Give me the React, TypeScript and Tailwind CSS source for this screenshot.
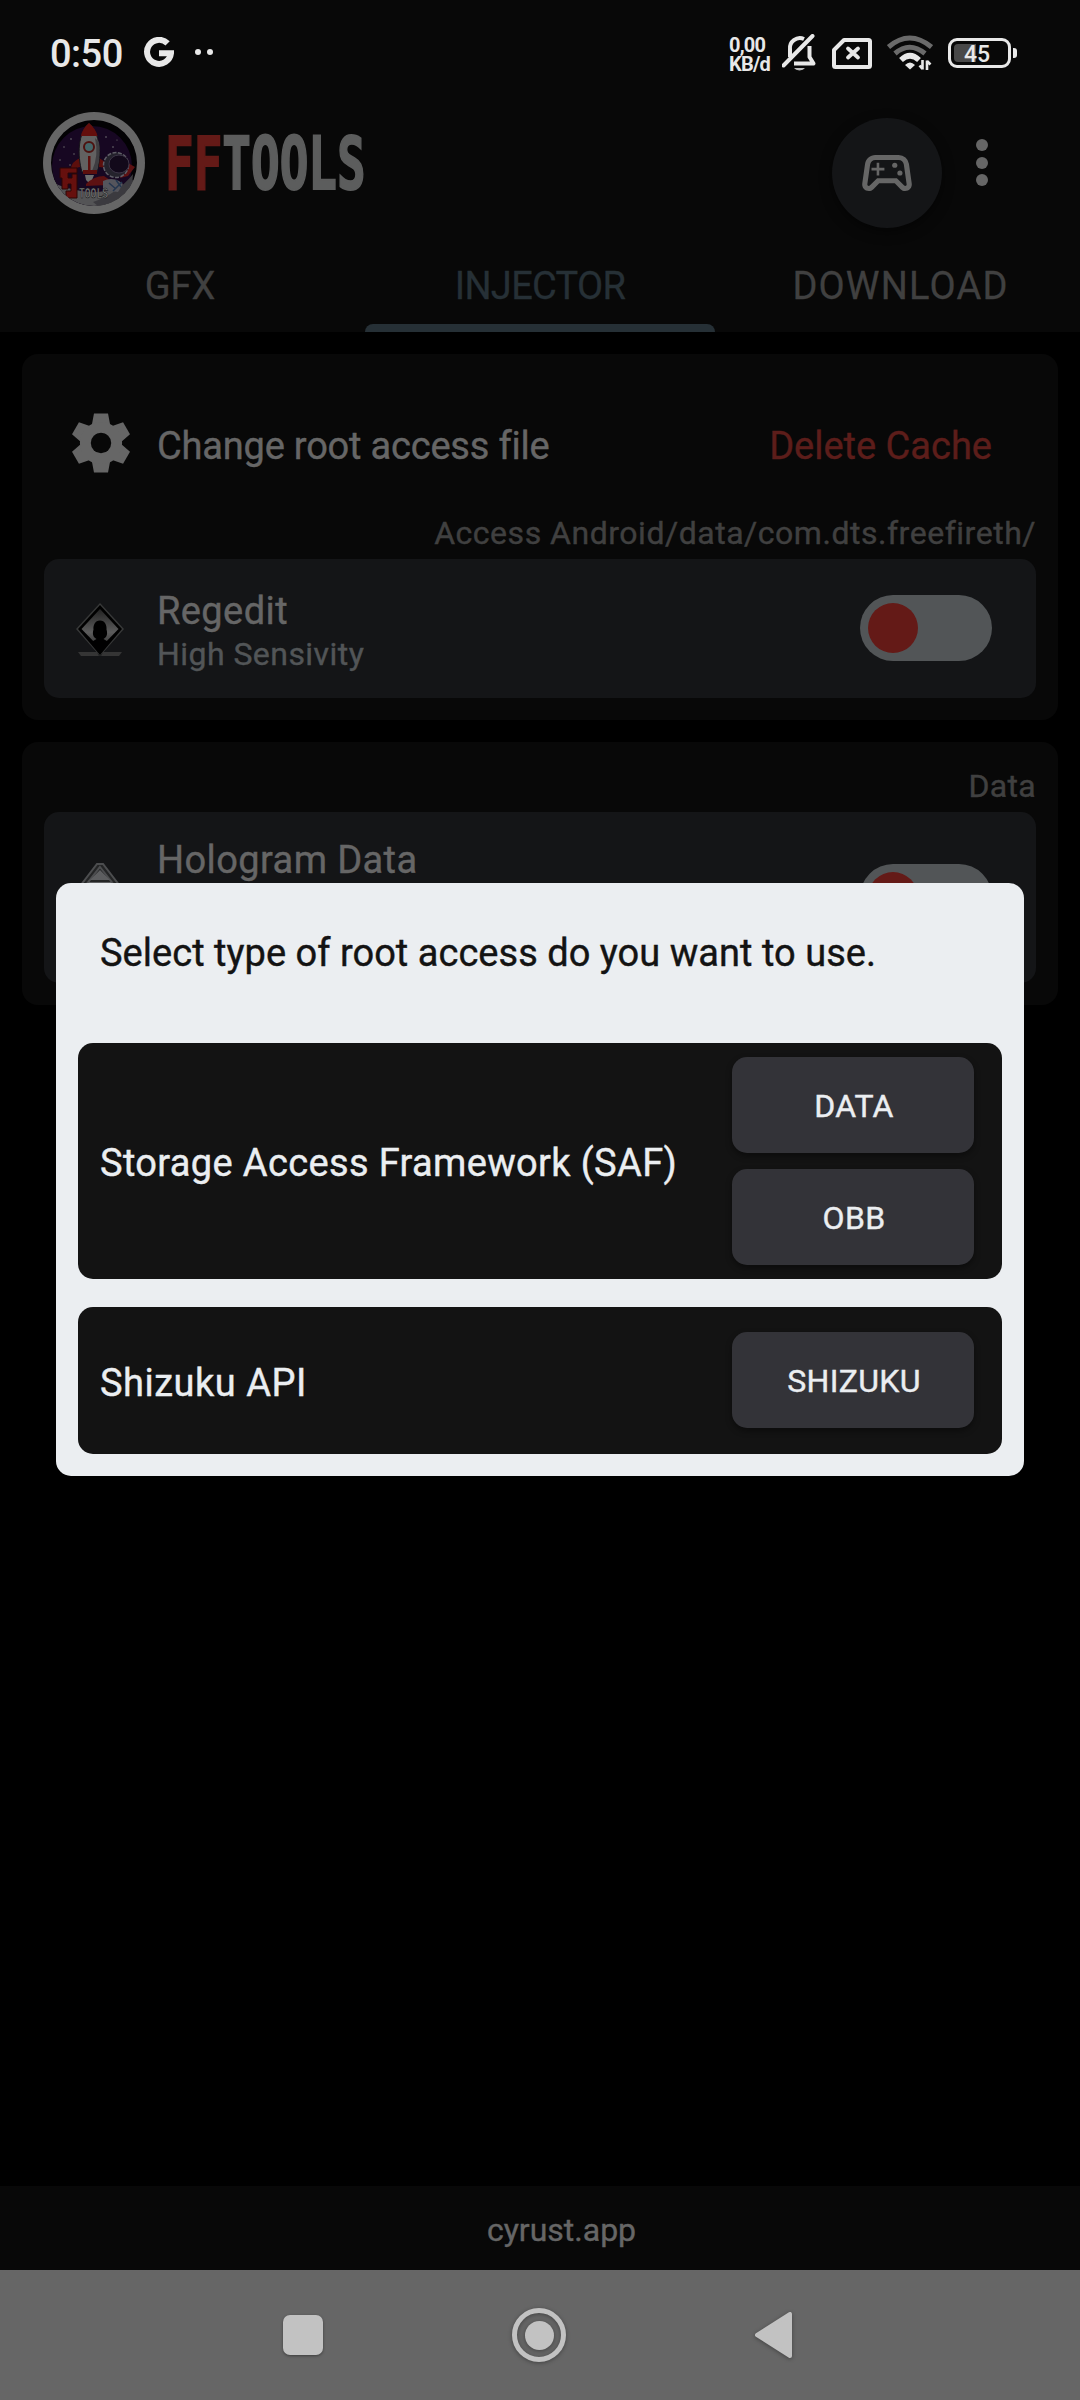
import { MdOutlineSportsEsports } from "react-icons/md";

function GoogleG() {
  return (
    <svg width="30" height="30" viewBox="0 0 30 30" fill="none" stroke="#e8e8e8" strokeWidth="6">
      <path d="M23.6 6.4A12 12 0 1 0 27 16.2H15" />
    </svg>
  );
}

function BellOff() {
  return (
    <svg width="36" height="38" viewBox="0 0 36 38" fill="none" stroke="#e8e8e8" strokeWidth="4">
      <path d="M8 23V15.500A10 10 0 0 1 22 5" />
      <path d="M27.500 12v11l4 6.500H12" strokeLinejoin="round" />
      <path d="M1.500 31.500 30.500 2" strokeLinecap="round" />
      <path d="M12 34h11a6 4 0 0 1-11 0z" fill="#bdbdbd" stroke="none" />
    </svg>
  );
}

function SimMissing() {
  return (
    <svg width="40" height="31" viewBox="0 0 40 31" fill="none" stroke="#e8e8e8" strokeLinejoin="round">
      <path d="M12 2H36.500Q38 2 38 3.500V27.500Q38 29 36.500 29H3.500Q2 29 2 27.500V12Z" strokeWidth="4" />
      <path d="m16 10.500 10 9M26 10.500l-10 9" strokeWidth="3.800" strokeLinecap="round" />
    </svg>
  );
}

function Wifi() {
  return (
    <svg width="46" height="36" viewBox="0 0 46 36" fill="none">
      <path d="M1.500 12Q22.500-6 44.500 12" stroke="#6a6a6a" strokeWidth="5" />
      <path d="M8 18.500Q22.500 6 38 18.500" stroke="#6a6a6a" strokeWidth="5" />
      <path d="M14 25Q23 16.500 32 25" stroke="#e8e8e8" strokeWidth="5.500" />
      <path d="M18 30Q23 25 28 30L23 34.500Z" fill="#e8e8e8" />
      <path d="M35.500 25v9.500M35.500 34l-3-3.500M40 35v-9.500M40 26l3.500 3.500" stroke="#e8e8e8" strokeWidth="2.600" />
    </svg>
  );
}

function RocketLogo() {
  return (
    <svg width="102" height="102" viewBox="0 0 102 102">
      <defs>
        <clipPath id="badge"><circle cx="51" cy="51" r="43" /></clipPath>
      </defs>
      <circle cx="51" cy="51" r="51" fill="#666" />
      <g clipPath="url(#badge)">
        <circle cx="51" cy="51" r="43.500" fill="#030204" />
        <circle cx="49" cy="54" r="40" fill="#170722" />
        <g fill="#777">
          <circle cx="28" cy="27" r=".8" /><circle cx="21" cy="35" r=".7" /><circle cx="31" cy="42" r=".7" />
          <circle cx="63" cy="25" r=".8" /><circle cx="70" cy="35" r=".8" /><circle cx="17" cy="48" r=".7" />
          <circle cx="27" cy="53" r=".7" /><circle cx="74" cy="28" r=".6" />
        </g>
        <path d="M8 70Q26 78 46 80T94 66L80 94H8Z" fill="#545456" />
        <path d="M50 90Q74 82 90 62L88 88 60 98Z" fill="#3b3a3f" />
        <path d="M37 46q-9 4-9 11l9-2zM56 46q8 4 8 10l-8-1z" fill="#5c0f0d" />
        <path d="M46 11C35 21 34 43 39 60H54C59 43 57 21 46 11Z" fill="#626161" stroke="#17151a" />
        <path d="M52 26q4 18-3 33h5q4-18 2-29z" fill="#3f3e42" />
        <path d="M46 11Q39 17 38 24H54.500Q53 17 46 11Z" fill="#640e0c" />
        <circle cx="46" cy="35" r="5" fill="#446568" stroke="#4d1210" strokeWidth="2" />
        <path d="M45 44h2.500v18H45zM40 58h14v4H40z" fill="#5c0f0d" />
        <path d="M42 63h9l-2 5-3 3-3-3z" fill="#6c6c6c" />
        <path d="M43 72q8-8 18-8l6 4-2 5-22 1zM85 51l7 4-7 9-8 2z" fill="#5c1112" />
        <circle cx="73" cy="53" r="12.500" fill="#24222c" stroke="#5f5d66" strokeWidth="1.500" strokeDasharray="4 1.500" />
        <ellipse cx="76" cy="52" rx="10" ry="9" fill="#12091a" stroke="#3c3446" />
        <path d="M60 69q8-4 16 0l4 3-5 8-15-2z" fill="#55555c" />
        <path d="m66 71 7 6M73 68l5 7M79 70l-9 9" stroke="#24364f" strokeWidth="1.500" />
        <path d="M17 56H34V61H25V66H29V62H34V86H23V79H28V72H25V77H19V66H17Z" fill="#66100e" stroke="#2c0605" />
        <text x="36" y="85.500" fontFamily="Liberation Mono" fontWeight="700" fontSize="15" textLength="29" lengthAdjust="spacingAndGlyphs" fill="#7e7e7e" stroke="#111" strokeWidth=".6">TOOLS</text>
      </g>
    </svg>
  );
}

function Wordmark() {
  return (
    <div className="h-[58px] w-[200px]">
      <div className="origin-left scale-x-[0.652] whitespace-nowrap font-['DejaVu_Sans_Mono',monospace] text-[73px] leading-[60px] font-bold text-[#5c5d5d] [-webkit-text-stroke:2px]">
        <span className="text-[#641a17]">FF</span>TOOLS
      </div>
    </div>
  );
}

function Gear() {
  return (
    <svg width="58" height="60" viewBox="-29 -30 58 60" fill="#666">
      {[0, 60, 120, 180, 240, 300].map((a) => (
        <path key={a} d="M-7-29.500H7L9-19 0 0-9-19Z" transform={`rotate(${a})`} />
      ))}
      <circle r="15.600" fill="none" stroke="#666" strokeWidth="11" />
      <circle r="10.200" fill="#080808" />
    </svg>
  );
}

function RegeditIcon() {
  return (
    <svg width="56" height="56" viewBox="0 0 56 56">
      <defs>
        <linearGradient id="steel" x1="0" y1="0" x2="0" y2="1">
          <stop offset="0" stopColor="#222" /><stop offset=".6" stopColor="#5c5c5c" /><stop offset="1" stopColor="#2a2a2a" />
        </linearGradient>
      </defs>
      <path d="M6 51h19l2 4H9zM50 51H31l-2 4h18z" fill="#353535" />
      <path d="M28 2 52 28 28 55 4 28Z" fill="#383939" />
      <path d="M28 4 50 28 28 54 6 28Z" fill="#000" />
      <path d="M28 8 46.500 28 28 47 9.500 28Z" fill="url(#steel)" />
      <path d="M28 19.500c5 0 7 5 6.500 9 1.500 5 0 8-3 9.500l5 3L28 50l-8.500-9 5-3c-3-1.500-4.500-4.500-3-9.500-.5-4 1.500-9 6.500-9z" fill="#000" />
    </svg>
  );
}

function HologramIcon() {
  return (
    <svg width="56" height="66" viewBox="0 0 56 66" fill="none">
      <path d="M25 2h6L54 32 31 62h-6L2 32Z" fill="#242526" stroke="#4c4d4f" strokeWidth="2" />
      <path d="M28 5 49 32 28 59 7 32Z" stroke="#4c4d4f" strokeWidth="2" />
      <path d="M28 8 38 18H18ZM17 20h22l9 12-20 24L8 32Z" fill="#5d5e60" />
    </svg>
  );
}

function Toggle() {
  return (
    <div className="flex h-[66px] w-[132px] items-center rounded-full bg-[#525557] pl-2">
      <div className="size-[50px] rounded-full bg-[#641a17]" />
    </div>
  );
}

function DialogButton({ children }: { children: string }) {
  return (
    <button className="h-24 w-[242px] rounded-[15px] bg-[#333338] pt-[2px] pl-[2px] text-[32px] tracking-[0.300px] text-[#ebeef1] shadow-[0_3px_6px_rgba(0,0,0,0.4)] [-webkit-text-stroke:0.4px]">
      {children}
    </button>
  );
}

export default function App() {
  return (
    <div className="relative flex h-[2400px] w-[1080px] flex-col overflow-hidden bg-black font-[Roboto,sans-serif]">
      <header className="flex h-[332px] shrink-0 flex-col bg-[#080808]">
        <div className="flex h-[104px] items-center justify-between pr-[63px] pl-[50px] text-[#e8e8e8]">
          <div className="flex items-center">
            <span className="pt-[3px] text-[38px] leading-[44px] font-medium tracking-[-0.5px]">0:50</span>
            <div className="ml-[21px]"><GoogleG /></div>
            <div className="ml-[21px] flex gap-1.5">
              <div className="size-1.5 rounded-full bg-[#e8e8e8]" />
              <div className="size-1.5 rounded-full bg-[#e8e8e8]" />
            </div>
          </div>
          <div className="flex items-center pt-[2px]">
            <div className="mr-[12px] flex w-[41px] flex-col pt-[4px] text-[20px] leading-[19.500px] font-bold tracking-[-0.8px] whitespace-nowrap">
              <span>0,00</span><span>KB/d</span>
            </div>
            <BellOff />
            <div className="mr-[15px] ml-[14px]"><SimMissing /></div>
            <Wifi />
            <div className="ml-[15px] flex h-[30px] w-[63px] items-center rounded-[9px] border-[3.500px] border-[#e8e8e8] p-[3px]">
              <div className="h-[18px] w-[22px] rounded-l-[4px] bg-[#484848]" />
              <span className="-ml-[12px] pt-[2px] text-[23px] leading-none font-medium">45</span>
            </div>
            <div className="ml-[2px] h-[10px] w-[4px] rounded-r-[3px] bg-[#e8e8e8]" />
          </div>
        </div>
        <div className="flex h-[138px] items-start pl-[43px]">
          <div className="mt-2"><RocketLogo /></div>
          <div className="mt-[30px] ml-[20px]"><Wordmark /></div>
          <div className="mt-[14px] ml-[467px] flex size-[110px] items-center justify-center rounded-full bg-[#141517] shadow-[0_4px_12px_rgba(0,0,0,0.5)]">
            <MdOutlineSportsEsports className="size-[62px] text-[#666]" />
          </div>
          <div className="mt-[35px] ml-[34px] flex flex-col gap-[5.500px]">
            <div className="size-3 rounded-full bg-[#666]" />
            <div className="size-3 rounded-full bg-[#666]" />
            <div className="size-3 rounded-full bg-[#666]" />
          </div>
        </div>
        <nav className="grid h-[90px] grid-cols-3 text-center text-[38px] leading-[44px] text-[#404040] [-webkit-text-stroke:0.3px]">
          <div className="pt-[22px]">GFX</div>
          <div className="flex flex-col items-center justify-between pt-[22px] text-[#263036]">
            <span className="tracking-[-0.700px]">INJECTOR</span>
            <div className="h-2 w-[350px] rounded-t-lg bg-[#263036]" />
          </div>
          <div className="pt-[22px] pl-px tracking-[1.200px]">DOWNLOAD</div>
        </nav>
      </header>

      <main className="flex grow flex-col px-[22px] pt-[22px] [-webkit-text-stroke:0.4px]">
        <section className="flex h-[366px] flex-col rounded-[16px] bg-[#080808] px-[22px]">
          <div className="flex h-[158px] items-center pt-[26px] pr-[44px] pl-[28px] text-[38px] text-[#666]">
            <div className="-mt-[6px]"><Gear /></div>
            <span className="ml-[27px] tracking-[-0.200px]">Change root access file</span>
            <span className="ml-auto text-[#5c1d1a]">Delete Cache</span>
          </div>
          <div className="flex h-[47px] items-center justify-end pb-[6px] text-[32px] tracking-[0.520px] text-[#404040]">Access Android/data/com.dts.freefireth/</div>
          <div className="flex h-[139px] items-center rounded-[15px] bg-[#141517] pr-[44px] pl-[28px]">
            <RegeditIcon />
            <div className="ml-[29px] flex flex-col pt-[6px]">
              <span className="text-[38px] leading-[44px] tracking-[0.400px] text-[#666]">Regedit</span>
              <span className="text-[32px] leading-[42px] tracking-[0.450px] text-[#525557]">High Sensivity</span>
            </div>
            <div className="mb-px ml-auto"><Toggle /></div>
          </div>
        </section>
        <section className="mt-[22px] flex h-[263px] flex-col rounded-[16px] bg-[#080808] px-[22px]">
          <div className="flex h-[70px] items-center justify-end pt-[18px] text-[32px] tracking-[0.300px] text-[#404040]">Data</div>
          <div className="flex h-[171px] rounded-[15px] bg-[#141517] pr-[44px] pl-[28px]">
            <div className="mt-[50px]"><HologramIcon /></div>
            <span className="mt-[26px] ml-[29px] text-[38px] leading-[44px] tracking-[0.400px] text-[#666]">Hologram Data</span>
            <div className="mt-[52px] ml-auto"><Toggle /></div>
          </div>
        </section>
      </main>

      <footer className="flex h-[84px] shrink-0 items-center justify-center bg-[#080808] pt-[4px] pl-[43px] text-[32px] text-[#666] [-webkit-text-stroke:0.4px]">cyrust.app</footer>
      <div className="flex h-[130px] shrink-0 items-center bg-[#666]">
        <div className="ml-[283px] size-10 rounded-[7px] bg-[#c2c2c2] shadow-[0_1px_3px_rgba(0,0,0,0.4)]" />
        <div className="ml-[189px] flex size-[54px] items-center justify-center rounded-full border-[5px] border-[#c2c2c2] drop-shadow-[0_1px_2px_rgba(0,0,0,0.35)]">
          <div className="size-[29px] rounded-full bg-[#c2c2c2]" />
        </div>
        <svg className="ml-[189px] drop-shadow-[0_1px_2px_rgba(0,0,0,0.35)]" width="38" height="46" viewBox="0 0 38 46" fill="#c2c2c2" stroke="#c2c2c2" strokeWidth="4" strokeLinejoin="round">
          <path d="M2 23 35 2V44Z" />
        </svg>
      </div>

      <div role="dialog" className="absolute top-[883px] left-[56px] flex h-[593px] w-[968px] flex-col rounded-[15px] bg-[#ebeef1] px-[22px] pt-[48px] text-[38px] leading-[44px] [-webkit-text-stroke:0.4px]">
        <p className="pl-[22px] tracking-[0.030px] text-[#131313]">Select type of root access do you want to use.</p>
        <div className="mt-[68px] flex h-[236px] items-center justify-between rounded-[15px] bg-[#131313] pr-[28px] pl-[22px] text-[#ebeef1]">
          <span className="pt-[4px] tracking-[0.350px]">Storage Access Framework (SAF)</span>
          <div className="flex flex-col gap-4">
            <DialogButton>DATA</DialogButton>
            <DialogButton>OBB</DialogButton>
          </div>
        </div>
        <div className="mt-[28px] flex h-[147px] items-center justify-between rounded-[15px] bg-[#131313] pr-[28px] pl-[22px] text-[#ebeef1]">
          <span className="pt-[4px] tracking-[0.500px]">Shizuku API</span>
          <div className="-mt-[1px]"><DialogButton>SHIZUKU</DialogButton></div>
        </div>
      </div>
    </div>
  );
}
